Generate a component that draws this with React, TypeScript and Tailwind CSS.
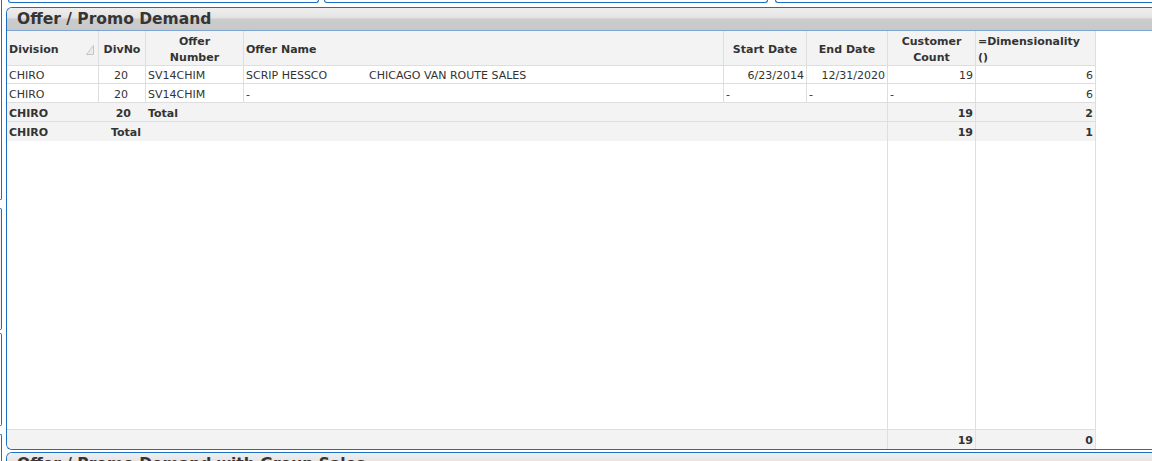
import React from "react";

const GRID = "grid grid-cols-[92px_47px_98px_480px_83px_81px_88px_120px]";
const LINE = "border-[#dedede]";
const BLUE = "border-[#1b6ec2]";

type Cell = { text?: React.ReactNode; align?: "left" | "right" | "center"; line?: boolean; extra?: string };

function Row({ cells, className, pad = "pt-[4px]" }: { cells: Cell[]; className: string; pad?: string }) {
  return (
    <div className={`${GRID} ${className}`}>
      {cells.map((c, i) => (
        <div
          key={i}
          className={`flex items-center overflow-hidden whitespace-nowrap px-[2px] ${pad} ${
            c.align === "right" ? "justify-end" : c.align === "center" ? "justify-center text-center" : "justify-start"
          } ${c.line === false ? "" : `border-r ${LINE}`} ${c.extra ?? ""}`}
        >
          {c.text}
        </div>
      ))}
    </div>
  );
}

function TitleBar({ title }: { title: string }) {
  return (
    <div className="h-[23px] shrink-0 bg-[linear-gradient(to_bottom,#efefef_0%,#e3e3e3_45%,#cccccc_50%,#c8c8c8_100%)] border-b border-[#7fa6d3] pl-[10px] text-[15.5px] leading-[23px] font-bold text-[#353535] whitespace-nowrap">
      {title}
    </div>
  );
}

function SortMark() {
  return (
    <svg width="8" height="10" viewBox="0 0 8 10" className="mr-[2px]">
      <polygon points="0.5,9.5 7.5,9.5 7.5,0.5" fill="#ececec" stroke="#c4c4c4" strokeWidth="1" />
    </svg>
  );
}

export default function App() {
  const noLine = (text?: React.ReactNode, align: Cell["align"] = "left", extra = ""): Cell => ({ text, align, line: false, extra });

  return (
    <div className="w-[1152px] h-[461px] overflow-hidden bg-white flex font-['DejaVu_Sans',Verdana,sans-serif] text-[11px] text-[#333]">
      {/* panels off to the left */}
      <div className="w-[6px] shrink-0 flex flex-col">
        <div className={`w-[2px] h-[200px] border-r border-b ${BLUE} rounded-br-[4px]`} />
        <div className={`w-[2px] h-[122px] mt-[8px] border-r border-y ${BLUE} rounded-r-[4px] bg-[#f0f0f0]`} />
        <div className={`w-[2px] h-[93px] mt-[3px] border-r border-y ${BLUE} rounded-r-[4px]`} />
        <div className={`w-[2px] flex-1 mt-[8px] border-r border-t ${BLUE} rounded-tr-[4px]`} />
      </div>

      <div className="w-[1146px] shrink-0 flex flex-col">
        {/* bottoms of the panels above */}
        <div className="h-[7px] shrink-0 flex">
          <div className={`ml-[2px] w-[311px] h-[3px] border-x border-b ${BLUE} rounded-b-[4px]`} />
          <div className={`ml-[5px] w-[444px] h-[3px] border-x border-b ${BLUE} rounded-b-[4px]`} />
          <div className={`ml-[7px] flex-1 h-[3px] border-l border-b ${BLUE} rounded-bl-[4px]`} />
        </div>

        {/* Offer / Promo Demand */}
        <div className={`h-[443px] shrink-0 flex flex-col border-l border-y ${BLUE} rounded-l-[6px] overflow-hidden`}>
          <TitleBar title="Offer / Promo Demand" />
          <div className="flex-1 flex min-h-0">
            <div className="w-[1089px] flex flex-col">
              {/* header */}
              <Row
                className={`h-[35px] border-b ${LINE} bg-[#f3f3f3] font-bold leading-[16px]`}
                cells={[
                  { text: <div className="flex w-full items-center justify-between"><span>Division</span><SortMark /></div> },
                  { text: "DivNo", align: "center" },
                  { text: <span>Offer<br />Number</span>, align: "center" },
                  { text: "Offer Name" },
                  { text: "Start Date", align: "center" },
                  { text: "End Date", align: "center" },
                  { text: <span>Customer<br />Count</span>, align: "center" },
                  { text: <span>=Dimensionality<br />()</span> },
                ]}
              />
              {/* data rows */}
              <Row
                className={`h-[18px] border-b ${LINE}`}
                cells={[
                  { text: "CHIRO" },
                  { text: "20", align: "right", extra: "pr-[17px]" },
                  { text: "SV14CHIM" },
                  { text: <span><span className="inline-block w-[123px]">SCRIP HESSCO</span>CHICAGO VAN ROUTE SALES</span> },
                  { text: "6/23/2014", align: "right" },
                  { text: "12/31/2020", align: "right" },
                  { text: "19", align: "right" },
                  { text: "6", align: "right" },
                ]}
              />
              <Row
                className={`h-[19px] border-b ${LINE}`}
                cells={[
                  { text: "CHIRO" },
                  { text: "20", align: "right", extra: "pr-[17px]" },
                  { text: "SV14CHIM" },
                  { text: "-" },
                  { text: "-" },
                  { text: "-" },
                  { text: "-" },
                  { text: "6", align: "right" },
                ]}
              />
              {/* totals */}
              <Row
                className={`h-[19px] border-b ${LINE} bg-[#f3f3f3] font-bold`}
                cells={[
                  noLine("CHIRO"),
                  noLine("20", "right", "pr-[15px]"),
                  noLine("Total"),
                  noLine(),
                  noLine(),
                  { text: null },
                  { text: "19", align: "right" },
                  { text: "2", align: "right" },
                ]}
              />
              <Row
                className="h-[19px] bg-[#f3f3f3] font-bold"
                cells={[
                  noLine("CHIRO"),
                  noLine("Total", "right", "pr-[5px]"),
                  noLine(),
                  noLine(),
                  noLine(),
                  { text: null },
                  { text: "19", align: "right" },
                  { text: "1", align: "right" },
                ]}
              />
              {/* empty space below the rows */}
              <div className={`flex-1 ${GRID} border-b ${LINE}`}>
                <div className={`col-span-6 border-r ${LINE}`} />
                <div className={`border-r ${LINE}`} />
                <div className={`border-r ${LINE}`} />
              </div>
              <Row
                className="h-[19px] bg-[#f3f3f3] font-bold"
                cells={[
                  noLine(),
                  noLine(),
                  noLine(),
                  noLine(),
                  noLine(),
                  { text: null },
                  { text: "19", align: "right" },
                  { text: "0", align: "right" },
                ]}
              />
            </div>
            <div className="flex-1 bg-white" />
          </div>
        </div>

        {/* next panel, cut off at the bottom of the window */}
        <div className={`mt-[2px] flex-1 border-l border-t ${BLUE} rounded-tl-[6px] overflow-hidden`}>
          <TitleBar title="Offer / Promo Demand with Group Sales" />
        </div>
      </div>
    </div>
  );
}
